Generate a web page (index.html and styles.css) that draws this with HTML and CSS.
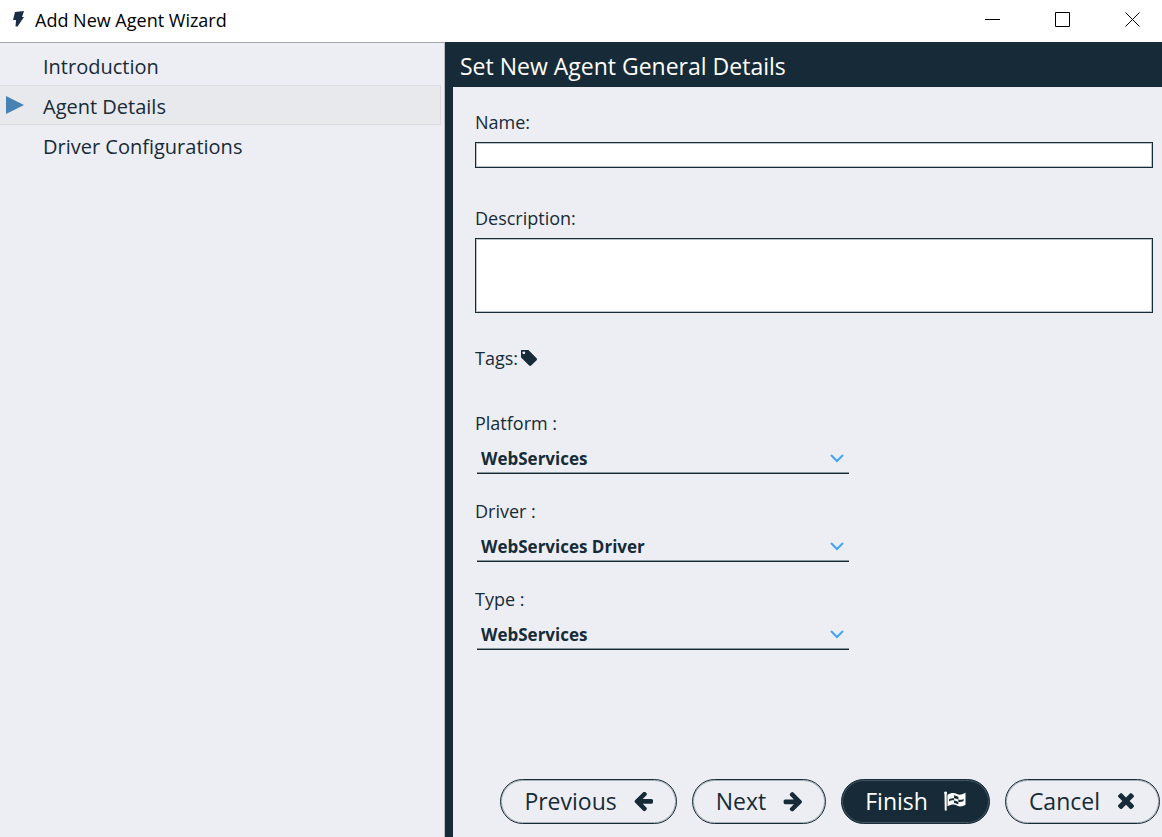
FILE: index.html
```html
<!DOCTYPE html>
<html lang="en">
<head>
<meta charset="utf-8">
<title>Add New Agent Wizard</title>
<link rel="stylesheet" href="styles.css">
</head>
<body>
<div class="window">
  <header class="titlebar">
    <svg class="app-icon" viewBox="0 0 11 16" aria-hidden="true"><path d="M2 1l9-1-2 6h2L4.500 15.500H2.500L3 9H0z"/></svg>
    <span class="app-title">Add New Agent Wizard</span>
    <div class="window-controls">
      <button class="window-button" type="button" aria-label="Minimize"><svg viewBox="0 0 16 16"><path d="M0 8.500h15"/></svg></button>
      <button class="window-button" type="button" aria-label="Maximize"><svg viewBox="0 0 16 16"><path d="M.5 1.500h14v14h-14z"/></svg></button>
      <button class="window-button" type="button" aria-label="Close"><svg viewBox="0 0 16 16"><path d="M.5 1.500l14 14M14.500 1.500l-14 14"/></svg></button>
    </div>
  </header>
  <div class="body">
    <nav class="steps" aria-label="Wizard steps">
      <a class="step" href="#intro">Introduction</a>
      <a class="step step-current" href="#details" aria-current="step"><svg class="marker" viewBox="0 0 18 18" aria-hidden="true"><path d="M0 0l18 9-18 9z"/></svg>Agent Details</a>
      <a class="step" href="#driver">Driver Configurations</a>
    </nav>
    <main class="page">
      <h1 class="page-title">Set New Agent General Details</h1>
      <form class="form">
        <div class="fields">
          <div class="field field-name">
            <label for="name">Name:</label>
            <input class="text-box" id="name" type="text">
          </div>
          <div class="field field-description">
            <label for="description">Description:</label>
            <textarea class="text-box text-area" id="description"></textarea>
          </div>
          <div class="tags">
            <span>Tags:</span>
            <button class="tag-button" type="button" aria-label="Edit tags"><svg viewBox="192 192 1451 1451"><path fill-rule="evenodd" d="M576 448q0-53-37.500-90.500t-90.500-37.500-90.500 37.500-37.500 90.500 37.500 90.500 90.500 37.500 90.500-37.500 37.500-90.500zm1067 576q0 53-37 90l-491 492q-39 37-91 37-53 0-90-37l-715-716q-38-37-64.500-101t-26.500-117v-416q0-52 38-90t90-38h416q53 0 117 26.500t102 64.500l715 714q37 39 37 91z"/></svg></button>
          </div>
          <div class="field choice">
            <label for="platform">Platform :</label>
            <div class="select-wrap"><select id="platform"><option>WebServices</option></select><svg class="chevron" viewBox="0 0 14 9" aria-hidden="true"><path d="M1 1l6 6 6-6"/></svg></div>
          </div>
          <div class="field choice">
            <label for="driver-type">Driver :</label>
            <div class="select-wrap"><select id="driver-type"><option>WebServices Driver</option></select><svg class="chevron" viewBox="0 0 14 9" aria-hidden="true"><path d="M1 1l6 6 6-6"/></svg></div>
          </div>
          <div class="field choice">
            <label for="type">Type :</label>
            <div class="select-wrap"><select id="type"><option>WebServices</option></select><svg class="chevron" viewBox="0 0 14 9" aria-hidden="true"><path d="M1 1l6 6 6-6"/></svg></div>
          </div>
        </div>
        <div class="actions">
          <button class="action" type="button">Previous<svg class="icon" viewBox="64 256 1600 1500"><path d="M1664 896v128q0 53-32.500 90.500t-84.500 37.500h-704l293 294q38 36 38 90t-38 90l-75 76q-37 37-90 37-52 0-91-37l-651-652q-37-37-37-90 0-52 37-91l651-650q38-38 91-38 52 0 90 38l75 74q38 38 38 91t-38 91l-293 293h704q52 0 84.500 37.500t32.500 90.500z"/></svg></button>
          <button class="action" type="button">Next<svg class="icon" viewBox="0 210 1600 1530"><path d="M1600 960q0 54-37 91l-651 651q-39 37-91 37-51 0-90-37l-75-75q-38-38-38-91t38-91l293-293h-704q-52 0-84.500-37.500t-32.500-90.500v-128q0-53 32.500-90.500t84.500-37.500h704l-293-294q-38-36-38-90t38-90l75-75q38-38 90-38 53 0 91 38l651 651q37 35 37 90z"/></svg></button>
          <button class="action action-primary" type="button">Finish<svg class="icon icon-flag" viewBox="0 0 23 20"><path d="M.5 2.500a1.500 1.500 0 1 1 2.300 0V20H.8z"/><path fill-rule="evenodd" d="M3.600 3.500C8 .8 11 1.300 13.500 2.700s5 .8 9-1.200V14c-4 2.200-6.500 2-9 .6S8 13 3.600 15.500zM5.300 8.300v2.200c2-1 3.400-1.300 5.200-1.100V7.200c-1.800-.1-3.200.1-5.200 1.100zM10.500 4v3.200c1.500.1 2.700.7 4.500 1.300V5.500C13.200 5.100 12 4.200 10.500 4zM15 8.500v2.400c1.800.5 3.500.1 5.500-.8V7.900c-2 .9-3.700 1.200-5.500.6zM10.500 9.400v2.600c1.600.1 2.700.8 4.500 1.400v-2.500c-1.700-.5-2.700-1.300-4.500-1.500z"/></svg></button>
          <button class="action" type="button">Cancel<svg class="icon" viewBox="154 286 1484 1484"><path d="M1490 1322q0 40-28 68l-136 136q-28 28-68 28t-68-28l-294-294-294 294q-28 28-68 28t-68-28l-136-136q-28-28-28-68t28-68l294-294-294-294q-28-28-28-68t28-68l136-136q28-28 68-28t68 28l294 294 294-294q28-28 68-28t68 28l136 136q28 28 28 68t-28 68l-294 294 294 294q28 28 28 68z"/></svg></button>
        </div>
      </form>
    </main>
  </div>
</div>
</body>
</html>
```
FILE: styles.css
```css
:root {
  --ink: #162b37;
  --surface: #edeef4;
}

* { box-sizing: border-box; }

body {
  margin: 0;
  background: var(--surface);
  color: var(--ink);
  font-family: "Open Sans", "Noto Sans", sans-serif;
  font-size: 18px;
  line-height: 24px;
}

button, input, textarea, select {
  font: inherit;
  color: inherit;
}

svg { display: block; fill: currentColor; }

.window {
  display: flex;
  flex-direction: column;
  min-height: 100vh;
}

.titlebar {
  display: flex;
  align-items: center;
  height: 42px;
  padding: 0 0 2px 13px;
  background: #fff;
  color: #000;
}

.app-icon {
  width: 11px;
  height: 16px;
  margin-right: 11px;
  margin-bottom: 2px;
  color: #1b2c45;
}

.window-controls {
  display: flex;
  margin-left: auto;
}

.window-button {
  display: flex;
  align-items: center;
  justify-content: center;
  width: 70px;
  height: 40px;
  padding: 0 0 2px 12px;
  border: 0;
  background: none;
}

.window-button svg {
  width: 16px;
  height: 16px;
  fill: none;
  stroke: #000;
}

.body {
  display: flex;
  flex: 1;
}

.steps {
  flex: 0 0 445px;
  padding: 2px 3px 0 0;
  border-top: 1px solid #a5a7ac;
  border-right: 1px solid #b9bcc1;
  font-size: 20px;
}

.step {
  position: relative;
  display: flex;
  align-items: center;
  height: 40px;
  padding: 3px 0 0 43px;
  border: 1px solid transparent;
  border-left: 0;
  color: inherit;
  text-decoration: none;
}

.step-current {
  border-color: #d9dbde;
  background: #e8e9ec;
}

.marker {
  position: absolute;
  left: 6px;
  top: 10px;
  width: 18px;
  height: 18px;
  color: #4682b4;
}

.page {
  display: flex;
  flex: 1;
  flex-direction: column;
  min-width: 0;
  border-left: 8px solid var(--ink);
}

.page-title {
  margin: 0;
  padding: 10px 7px 7px;
  background: var(--ink);
  color: #fff;
  font-size: 23px;
  font-weight: 400;
  line-height: 28px;
}

.form {
  display: flex;
  flex: 1;
  flex-direction: column;
  justify-content: space-between;
}

.fields { padding: 23px 9px 0 22px; }

.field {
  display: flex;
  flex-direction: column;
}

.field-name { margin-bottom: 38px; }
.field-description { margin-bottom: 33px; }

.text-box {
  width: 100%;
  height: 26px;
  margin-top: 8px;
  padding: 0 4px;
  border: 1px solid var(--ink);
  border-radius: 0;
  background: #fff;
  box-shadow: inset 0 0 0 1px #bcc3c8;
}

.text-area {
  height: 75px;
  resize: none;
}

.tags {
  display: flex;
  gap: 3px;
  margin-bottom: 41px;
}

.tag-button {
  align-self: flex-start;
  margin-top: 4px;
  padding: 0;
  border: 0;
  background: none;
}

.tag-button svg {
  width: 16px;
  height: 16px;
}

.choice {
  max-width: 374px;
  margin-bottom: 25px;
}

.select-wrap {
  position: relative;
  margin: 10px 0 0 2px;
}

.select-wrap select {
  display: block;
  width: 100%;
  height: 29px;
  padding: 0 24px 0 4px;
  border: 0;
  border-bottom: 1px solid var(--ink);
  border-radius: 0;
  background: none;
  box-shadow: inset 0 -1px #8a959b;
  font-size: 17px;
  font-weight: 700;
  appearance: none;
}

.chevron {
  position: absolute;
  top: 9px;
  right: 5px;
  width: 14px;
  height: 9px;
  fill: none;
  stroke: #42a5f5;
  stroke-width: 2;
  pointer-events: none;
}

.actions {
  display: flex;
  justify-content: flex-end;
  gap: 15px;
  padding: 0 2px 13px 0;
}

.action {
  display: flex;
  align-items: center;
  gap: 16px;
  height: 45px;
  padding: 0 23px 1px;
  border: 1px solid var(--ink);
  border-radius: 23px;
  background: none;
  box-shadow: inset 0 0 0 1px #a9b1b8;
  font-size: 23px;
}

.action-primary {
  background: var(--ink);
  box-shadow: inset 0 0 0 1px #445560;
  color: #fff;
}

.icon {
  width: 20px;
  height: 20px;
  margin-top: 2px;
}

.icon-flag {
  width: 22px;
  margin-top: 0;
}
```
